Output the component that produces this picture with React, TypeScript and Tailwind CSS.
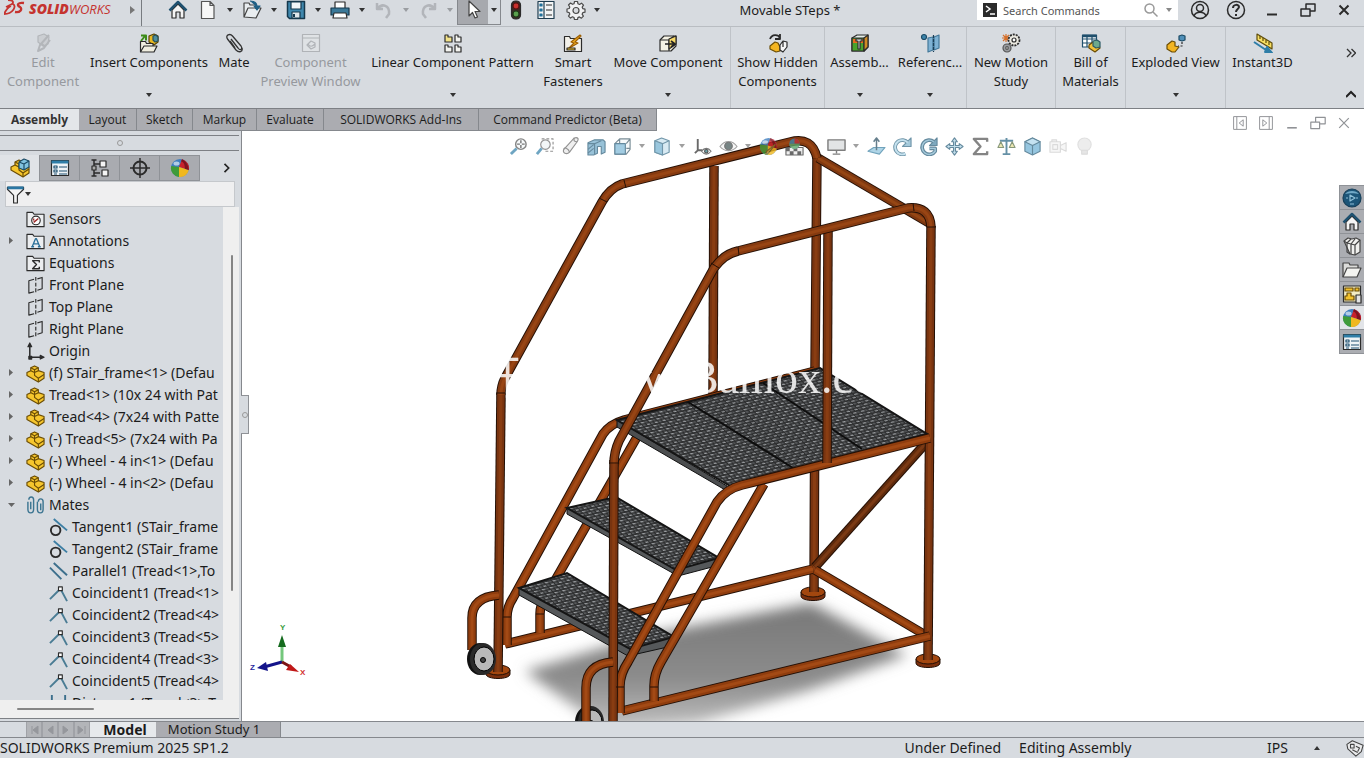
import type { ReactNode } from 'react';

interface IconProps {
  children: ReactNode;
  size?: string;
}

function Icon({ children, size = 'size-5' }: IconProps) {
  return (
    <svg
      viewBox="0 0 20 20"
      className={`${size} shrink-0`}
      fill="none"
      stroke="#2b2b2b"
      strokeWidth="1.2"
      strokeLinejoin="round"
      aria-hidden="true"
    >
      {children}
    </svg>
  );
}

function Ball() {
  return (
    <g stroke="none">
      <circle cx="10" cy="10" r="9" fill="#3f7fc0" />
      <path d="M9 9L12 1.200A9 9 0 0 1 18.800 12z" fill="#c8202c" />
      <path d="M9 9l9.800 3A9 9 0 0 1 9 19z" fill="#f0b81e" />
      <path d="M9 9v10A9 9 0 0 1 1.200 8z" fill="#3f9b3a" />
      <path d="M12 1.200c4 2 6 5 6.800 10.800l-4-1.300C15 7 14 4 11 3.500z" fill="#7d1420" />
      <ellipse cx="6.500" cy="5.500" rx="3" ry="2" fill="#fff" opacity=".6" />
    </g>
  );
}

const yellowPart = (
  <>
    <path d="M1 9l4-2V4l4-2 4 2v3l6 2v6l-6 4-12-7z" fill="#f6c62d" stroke="#6b4d05" />
    <path d="M5 7l4 2 4-2M9 9v3l4 3 6-4M13 15v4M5 4l4 2 4-2M9 6v3" stroke="#6b4d05" />
  </>
);

const homeIcon = (
  <>
    <path d="M4 10v8h4v-6h4v6h4v-8l-6-6z" fill="#f4f4f4" />
    <path d="M1.500 10.500L10 2l8.500 8.500" stroke="#1f5170" strokeWidth="2.500" />
  </>
);

const listIcon = (
  <>
    <path d="M1.500 2.500h17v15h-17z" fill="#eef3f6" />
    <path d="M1.500 4h17" stroke="#2f7ea8" strokeWidth="3" />
    <path d="M4 8h3v2H4zM4 12h3v2H4zM9 9h8M9 13h8M4 16h3M9 16h8" stroke="#1f5170" />
  </>
);

const folderPath = <path d="M1 17.500V2.500h6l1.500 2H19v13z" fill="#eceef0" />;

const icons = {
  home: homeIcon,
  page: <path d="M3.500 1.500h8.500l4 4v13H3.500zM12 1.500v4h4" fill="#f7f7f7" stroke="#555" />,
  open: (
    <>
      <path d="M2 17V3h5l1 2h6v4M2 17l4-9h13l-5 10z" fill="#e9edf0" stroke="#444" />
      <path d="M8 1c5 0 7 2 7 6M12 6l3 4 3-4z" fill="#1f5f85" stroke="#1f5f85" />
    </>
  ),
  save: (
    <>
      <path d="M1.500 1.500h17v17h-15l-2-2z" fill="#3f87ad" stroke="#16384c" strokeWidth="1.500" />
      <path d="M5 2h10v7H5z" fill="#f2f5f7" stroke="#16384c" />
      <path d="M6 12h8v6H6z" fill="#dfe6ea" stroke="#16384c" />
      <path d="M8 14v3" stroke="#16384c" strokeWidth="2" />
    </>
  ),
  print: (
    <>
      <path d="M5 8V2h10v6" fill="#fff" />
      <path d="M1 8h18v7H1z" fill="#3a7898" stroke="#16384c" />
      <path d="M4 13h12l1 5H3z" fill="#fff" />
    </>
  ),
  undo: <path d="M3 3v6h6M3.500 8.500C8 3 16 5 15 14l-3 4" stroke="#b2b5ba" strokeWidth="2.500" />,
  redo: <path d="M17 3v6h-6M16.500 8.500C12 3 4 5 5 14l3 4" stroke="#b2b5ba" strokeWidth="2.500" />,
  cursor: <path d="M6 1v15l3.500-3.500L12 18l2.500-1-2.500-5.500h5z" fill="#fff" stroke="#444" />,
  traffic: (
    <>
      <rect x="5.500" y="1" width="9" height="18" rx="4" fill="#3a2a24" />
      <circle cx="10" cy="6" r="3" fill="#c9302c" stroke="#5b1210" />
      <circle cx="10" cy="14" r="3" fill="#5aa04d" stroke="#1d3a18" />
    </>
  ),
  options: (
    <>
      <path d="M2 1.500h16v17H2zM8 1.500v17" fill="#f2f4f5" stroke="#1f3d50" />
      <path d="M4 4h2v2H4zM4 9h2v2H4zM4 14h2v2H4z" fill="#3187b5" stroke="#1f6c95" />
      <path d="M10 5h6M10 10h6M10 15h6" />
    </>
  ),
  gear: (
    <>
      <path
        d="M8.500 1.500h3l.5 2.300 1.500.7 2-1.300 2 2-1.300 2 .7 1.500 2.100.5v3l-2.200.5-.7 1.500 1.300 2-2 2-2-1.300-1.500.7-.4 2.100h-3L8 17.500l-1.500-.7-2 1.300-2-2 1.300-2-.7-1.500L1 12V9l2.200-.5.6-1.500-1.300-2 2-2 2 1.300L8 3.800z"
        fill="#f0f1f3"
        stroke="#4a4a4a"
      />
      <circle cx="10" cy="10.500" r="3" fill="#d8dbe0" stroke="#4a4a4a" />
    </>
  ),
  edit: (
    <>
      <path d="M5 3l6-2 5 3-1 7-5 2-5-4z" fill="#cbced2" stroke="#b3b6ba" />
      <path d="M16 2L7 12l-2 6 6-3 6-8M9 11l3 3" stroke="#b3b6ba" strokeWidth="2" />
    </>
  ),
  insert: (
    <>
      <path d="M10 3l5-2 4 2v6l-4 3-5-3z" fill="#e9b820" stroke="#594505" />
      <path d="M14 3l3-1 2 2v4l-3 1-2-2z" fill="#4f8f9c" stroke="#24505c" />
      <path d="M2 8l4-5M2 2.500h5v5" stroke="#3c8b18" strokeWidth="2" />
      <path d="M1.500 19V8.500h5l1 2H14v3M1.500 19l3.500-6h13l-3 6z" fill="#f0eee0" />
    </>
  ),
  clip: (
    <path
      d="M7 6l7 9c2 3 5 1 3-2L8.500 3C6 0 1 2 3.500 6L12 17c3 3 7 2 6-2M6 8l5 7"
      stroke="#333"
      strokeWidth="1.300"
    />
  ),
  preview: (
    <>
      <path d="M1.500 1.500h17v17h-17zM1.500 5h17" fill="#dfe2e5" stroke="#b0b3b7" />
      <path d="M6 12l4-4 4 2v4l-4 2zM7 11c2 3 4 3 7 0" stroke="#b0b3b7" />
    </>
  ),
  pattern: (
    <>
      <path d="M2 2h3v2h4v5H2z" fill="#f3e38a" />
      <path d="M12 2h3v2h3v5h-6zM2 12h3v2h4v5H2zM12 12h3v2h3v5h-6z" fill="#f4f4f0" />
    </>
  ),
  fasteners: (
    <>
      <path d="M1.500 18.500V3.500h5l1 2h11v13z" fill="#f3f1ea" />
      <path d="M17 2L8 9l3 1-6 6 10-6-3-1 6-6z" fill="#f5b120" stroke="#9c5f06" />
      <path d="M4 15h8v2H4z" fill="#f6c62d" />
    </>
  ),
  move: (
    <>
      <path d="M2 7l4-4h12v10l-5 5H2z" fill="#f4f2e4" />
      <path d="M2 7h9l5-4M11 7v11" />
      <path d="M11 6l7-3v8l-7 5z" fill="#f7d968" />
      <path d="M7 11h10M13 8l4 3-4 3" stroke="#222" strokeWidth="1.600" />
    </>
  ),
  hidden: (
    <>
      <path d="M2 6c2-5 8-5 10-1M12 1v5H7" strokeWidth="1.800" />
      <path d="M2 13l5-4 3 1 2 4v4l-4 1-6-3z" fill="#f3b522" stroke="#6b4d05" />
      <path d="M12 12l3-4 4 1v5l-4 5-3-2zM15 8v6" fill="#f7f7f7" />
    </>
  ),
  assembly: (
    <>
      <path d="M2 5l5-3h11v12l-4 4H2z" fill="#e4efe8" />
      <path d="M2 5h12v13H2z" fill="#49a32d" />
      <path d="M3 6h10v4H3z" fill="#e86b20" stroke="none" />
      <path d="M6 6h6v2h-2v8H8V8H6z" fill="#e8eef2" />
      <path d="M14 5l4-3v12l-4 4z" fill="#cf8b24" />
    </>
  ),
  reference: (
    <>
      <circle cx="4" cy="4" r="2.500" fill="#3c84ab" stroke="#1c4b66" />
      <path d="M8 5l5-1v13l-5 2zM14 4l5-2v13l-5 2z" fill="#7fb2d4" stroke="#44799a" />
      <path d="M13.500 2v17" stroke="#1c3d55" strokeDasharray="3 1" />
    </>
  ),
  motion: (
    <>
      <path d="M5 1v8M1 5h8M2 2l6 6M8 2L2 8" stroke="#d6702b" />
      <circle cx="13" cy="7" r="5.500" fill="#eceae2" strokeDasharray="2 1" strokeWidth="1.800" />
      <circle cx="13" cy="7" r="2" fill="#fff" />
      <circle cx="6" cy="15" r="4" fill="#9a9da1" stroke="#555" />
      <circle cx="6" cy="15" r="1.300" fill="#ddd" stroke="#555" />
    </>
  ),
  bom: (
    <>
      <path d="M1.500 2h14v12h-14zM1.500 6h14M1.500 10h14M6 2v12M11 2v12" fill="#fff" stroke="#1f4f6c" />
      <path d="M1.500 3h14" stroke="#1f4f6c" strokeWidth="2.500" />
      <path d="M8 12l4-3 5 1 2 5-5 4-6-4z" fill="#f3c23a" stroke="#6b4d05" />
      <path d="M12 8l4-1 3 2v5l-4 1-3-2z" fill="#6da98d" stroke="#2c5a66" />
    </>
  ),
  exploded: (
    <>
      <path d="M1 12l5-4 3 1v4l4 1-4 5H6l-5-3z" fill="#f3b522" stroke="#6b4d05" />
      <path d="M13 3l3-1 3 1v4l-3 1-3-1z" fill="#4f8fb8" stroke="#1c4b66" />
      <path d="M16 9v4h-4" strokeDasharray="2 1.500" />
    </>
  ),
  instant: (
    <>
      <path d="M4 1l15 9v6L4 7z" fill="#f8df62" stroke="#5f4d0b" />
      <path d="M7 3v3M10 5v3M13 7v3M16 9v3" stroke="#5f4d0b" />
      <path d="M1 9l12 8M14 14l5 6-7-1z" fill="#2f7ea8" stroke="#2f7ea8" strokeWidth="2" />
    </>
  ),
  part: yellowPart,
  assemblyTab: (
    <>
      {yellowPart}
      <path d="M9 4l5-3 5 2v6l-5 3-5-2z" fill="#82c3df" stroke="#1c4b66" />
      <path d="M9 4l5 2 5-3M14 6v6" stroke="#1c4b66" />
    </>
  ),
  list: listIcon,
  config: (
    <>
      <path d="M4 2v16M1.500 2h5M1.500 18h5M4 6h6M4 15h6" strokeWidth="1.500" />
      <path d="M10 3h6v6h-6zM12 12h6v6h-6z" fill="#f4f4f4" />
      <path d="M2 8h4v4H2z" fill="#aaa" />
    </>
  ),
  target: (
    <>
      <circle cx="10" cy="10" r="6.500" strokeWidth="2" />
      <path d="M10 0v20M0 10h20" strokeWidth="1.500" />
    </>
  ),
  ball: <Ball />,
  filter: (
    <>
      <path d="M1.500 2.500h17v2L12 11v8H8v-8L1.500 4.500z" fill="#f4f4f4" />
      <path d="M1.500 3h17" stroke="#2a76a3" strokeWidth="3" />
    </>
  ),
  sensors: (
    <>
      {folderPath}
      <circle cx="10.500" cy="11" r="4.500" fill="#fff" />
      <path d="M8 13l5-4M8 9v2" stroke="#9c2b2b" strokeWidth="1.500" />
    </>
  ),
  annotations: (
    <>
      {folderPath}
      <path d="M6.500 15.500L10 7h1l3.500 8.500M8 12.500h5M5.500 15.500h3M12.500 15.500h3" stroke="#2a6f98" strokeWidth="1.400" />
    </>
  ),
  equations: (
    <>
      {folderPath}
      <path d="M14 9V7H7l4 4-4 4.500h7v-2" strokeWidth="1.500" />
    </>
  ),
  plane: (
    <>
      <path d="M8.500 3.500L3 5v13l5.500-1.500M12 3l5-1.500v12L12 15" />
      <path d="M10.300 1v18" strokeDasharray="4 2" />
    </>
  ),
  origin: (
    <>
      <path d="M4 4v12h12" strokeWidth="1.600" />
      <path d="M2 5l2-4 2 4zM15 14l4 2-4 2zM3 15h3v3H3z" fill="#2b2b2b" />
    </>
  ),
  mates: (
    <path
      d="M2 6v8c0 5 6 5 6 0V4c0-4-5-4-5 0M5 6v8M12 6v8c0 5 6 5 6 0V6c0-4-5-4-5 0M15.500 8v7"
      stroke="#3c7591"
      strokeWidth="1.500"
    />
  ),
  tangent: (
    <>
      <circle cx="7" cy="13" r="5" strokeWidth="2" />
      <path d="M5 1l14 12" stroke="#3c7ea3" strokeWidth="2" />
    </>
  ),
  parallel: <path d="M1 6l12 12M5 1l14 13" stroke="#3c6f8c" strokeWidth="2" />,
  coincident: (
    <>
      <path d="M1 16L12 5l7 13" stroke="#4a7c94" strokeWidth="2" />
      <path d="M10 3h4v4h-4z" fill="#fff" />
    </>
  ),
  distance: <path d="M3 1v18M17 1v18M3 12h14" stroke="#3c6f8c" strokeWidth="2" />,
  zoomFit: (
    <>
      <circle cx="12.500" cy="7.500" r="5.500" fill="#f6f9fb" stroke="#666" strokeWidth="1.500" />
      <path d="M8 12l-6 6" stroke="#4b8fb3" strokeWidth="3" />
      <path d="M12.500 3.500v8M8.500 7.500h8" stroke="#555" strokeDasharray="3 2" strokeWidth="1.500" />
    </>
  ),
  zoomArea: (
    <>
      <path d="M7 2h12v13H9" strokeDasharray="3 2" stroke="#777" />
      <circle cx="11" cy="8" r="5" fill="#f0f4f6" stroke="#777" />
      <path d="M7 12l-5 6" stroke="#4b8fb3" strokeWidth="3" />
    </>
  ),
  pencil: (
    <>
      <path d="M14 1c4-1 5 1 3 4l-8 11c-3 3-8 1-6-3z" fill="#ececec" stroke="#777" />
      <path d="M14 1c-1 3 0 4 3 4M3 13c0-3 5-1 6 3" stroke="#777" />
    </>
  ),
  section: (
    <>
      <path d="M1 6l7-3h9l2 2v11l-4 2v-8h-4v7l-4 2H1z" fill="#7fb3cf" stroke="#3f6d86" />
      <path d="M1 7h7l7-3M8 7v11M1 13l6-5M1 17l6-5" stroke="#3f6d86" />
    </>
  ),
  cubeWire: (
    <>
      <path d="M7 2h11v11l-4 5H2V7zM14 7l4-5M7 2v5M14 12h4" fill="#f4f8fa" stroke="#59717d" />
      <path d="M2 7h11v11H2z" fill="#8cc0db" stroke="#3f6d86" />
    </>
  ),
  cubeShade: (
    <>
      <path d="M2 4l7-3 8 3v12l-7 3-8-3z" fill="#cfe6f1" stroke="#4e7d95" />
      <path d="M2 4l8 3v12l-8-3z" fill="#82bad6" stroke="#4e7d95" />
      <path d="M10 7l7-3" stroke="#4e7d95" />
    </>
  ),
  axes: (
    <>
      <path d="M5 2v12h5M5 14l-3 3" stroke="#444" strokeWidth="2" />
      <path d="M9 15c3-4 7-4 10 0-3 4-7 4-10 0z" fill="#fff" stroke="#555" />
      <circle cx="14" cy="15" r="1.800" fill="#3f8b93" />
    </>
  ),
  eye: (
    <>
      <path d="M1 10c5-7 13-7 18 0-5 6-13 6-18 0z" fill="#f4f4f4" stroke="#8c8c8c" />
      <circle cx="10" cy="9.500" r="4" fill="#566" stroke="#555" />
    </>
  ),
  appearance: (
    <>
      <Ball />
      <path d="M17 8l-7 9-3 1 1-3z" fill="#d9b34a" stroke="#7a6a2a" />
    </>
  ),
  scene: (
    <>
      <path d="M1 11h18v8H1z" fill="#ececec" stroke="#444" />
      <path d="M1 11h4v4H1zM9 11h4v4H9zM5 15h4v4H5zM13 15h4v4h-4z" fill="#444" stroke="none" />
      <circle cx="10" cy="7" r="5.500" fill="#3b82a8" stroke="none" />
      <path d="M10 7V1.500A5.500 5.500 0 0 1 15.500 7z" fill="#b9313a" stroke="none" />
      <path d="M4.500 7h11a5.500 5.500 0 0 1-11 0z" fill="#5aa468" stroke="none" />
    </>
  ),
  monitor: (
    <path d="M1 3h18v11H1zM10 14v3M6 18h8" fill="#dcdedf" stroke="#5e5e5e" strokeWidth="1.500" />
  ),
  normalTo: (
    <>
      <path d="M1 15l6-4h12l-6 7z" fill="#9ccbe2" stroke="#4e8dac" />
      <path d="M10 14V2M7 5l3-4 3 4" stroke="#3f5f70" strokeWidth="1.600" />
    </>
  ),
  rotate: (
    <>
      <path d="M13 17.500A7.500 7.500 0 1 1 15.500 6" stroke="#4e7d95" strokeWidth="4" />
      <path d="M19 1v9h-9z" fill="#8fbdd3" stroke="#4e7d95" />
      <path d="M13 17.500A7.500 7.500 0 1 1 15.500 6" stroke="#b8dcec" strokeWidth="2" />
    </>
  ),
  rotateG: (
    <>
      <path d="M15.500 5A7.500 7.500 0 1 0 17 15v-3h-6" stroke="#3f6d86" strokeWidth="4" />
      <path d="M19 1v8h-8z" fill="#5e93ae" stroke="#3f6d86" />
      <path d="M15.500 5A7.500 7.500 0 1 0 17 15v-3h-6" stroke="#8fbdd3" strokeWidth="1.500" />
    </>
  ),
  pan: (
    <path
      d="M10 1l3 4h-2v4h4V7l4 3-4 3v-2h-4v4h2l-3 4-3-4h2v-4H5v2l-4-3 4-3v2h4V5H7z"
      fill="#b5d8e8"
      stroke="#3f6d86"
    />
  ),
  sigma: <path d="M17 5V2H3l7 8-7 8h14v-3" stroke="#666" strokeWidth="2.500" />,
  scales: (
    <>
      <path d="M10 1v16M3 4h14M6 18h8" stroke="#3f7590" strokeWidth="2" />
      <path d="M1 11l3-6 3 6zM13 11l3-6 3 6z" fill="#e9e2a0" stroke="#6a7f5a" />
    </>
  ),
  cube: (
    <>
      <path d="M10 1l8 4v10l-8 4-8-4V5z" fill="#7db9d9" stroke="#3f6d86" />
      <path d="M2 5l8 4 8-4-8-4z" fill="#b7dcee" stroke="#3f6d86" />
      <path d="M10 9v10" stroke="#3f6d86" />
    </>
  ),
  camera: (
    <path d="M1 5h11v11H1zM12 9l6-3v9l-6-3zM3 5V3h5v2M4 8h5v5H4z" fill="#f4f4f4" stroke="#d2d2d2" />
  ),
  bulb: (
    <>
      <circle cx="10" cy="8" r="7" fill="#e9e9e9" stroke="#d8d8d8" />
      <path d="M7 14h6v4H7z" fill="#e0e0e0" stroke="#d4d4d4" />
    </>
  ),
  world: (
    <>
      <circle cx="10" cy="10" r="9" fill="#1c5578" stroke="#173f59" />
      <path d="M3 6c3-4 11-4 14 0-4-1-10-1-14 0z" fill="#71a9c6" stroke="none" />
      <path d="M8 7l5 3-5 3zM4 10h2M14 10h2M8 16h4" stroke="#8fc0d8" />
    </>
  ),
  books: (
    <>
      <path d="M2 5l4-3 4 1 4-1 4 2v12l-5 3-5-1z" fill="#f0f0ee" stroke="#444" />
      <path d="M2 5l3 2v9l3 2M5 7l4-4M5 7l4 1v10M9 8l4-5M9 8l4 1v10M13 9l5-5" stroke="#444" />
    </>
  ),
  folder: (
    <>
      <path d="M1 17V3h6l1 2h8v3" fill="#dcdcda" stroke="#444" />
      <path d="M1 17L5 8h14l-4 9z" fill="#f3f3f0" stroke="#444" />
    </>
  ),
  palette: (
    <>
      <path d="M1.500 2h17v16h-17z" fill="#f3ecc4" />
      <path d="M3 4h8v3H3zM13 4h4v3h-4zM5 9h4v3h3v4H3v-4h2z" fill="#f3c22e" stroke="#6b4d05" />
      <path d="M14 11h5v8h-5z" fill="#e3e3e3" />
    </>
  ),
  tag: (
    <>
      <path d="M1 6l6-4 12 5-2 7-6 5L2 11z" fill="#e9eaeb" stroke="#444" />
      <path d="M5 6h4v4H5zM11 8l4 2-2 4M7 12l6 3" stroke="#444" />
    </>
  ),
};

type IconName = keyof typeof icons;

function Caret({ className = 'text-[#333]' }: { className?: string }) {
  return (
    <svg viewBox="0 0 6 4" className={`h-1 w-1.5 shrink-0 ${className}`} fill="currentColor" aria-hidden="true">
      <path d="M0 0h6L3 4z" />
    </svg>
  );
}

const fileTools: { name: IconName; label: string; dim?: boolean }[] = [
  { name: 'page', label: 'New' },
  { name: 'open', label: 'Open' },
  { name: 'save', label: 'Save' },
  { name: 'print', label: 'Print' },
  { name: 'undo', label: 'Undo', dim: true },
  { name: 'redo', label: 'Redo', dim: true },
];

function Logo() {
  return (
    <svg viewBox="0 0 110 22" className="h-[22px] w-[110px] shrink-0" role="img" aria-label="SOLIDWORKS">
      <g fill="none" stroke="#c5332f" strokeWidth="1.800">
        <path d="M4 1c5 0 6 2 4 4L2 8M9 5c4 2 0 10-9 10 2-4 4-7 7-8" />
        <path d="M20 4c-6-1-8 2-4 4 3 2 0 6-5 5" strokeWidth="2.300" />
      </g>
      <text x="25" y="15" fontSize="14" fill="#c5332f" fontFamily="Open Sans, sans-serif" fontStyle="italic">
        <tspan fontWeight="800">SOLID</tspan>
        <tspan fontSize="13">WORKS</tspan>
      </text>
    </svg>
  );
}

function TitleBar() {
  return (
    <header className="flex h-[27px] shrink-0 items-start border-b border-[#b9bdc2] pr-0.5">
      <div className="flex h-5 items-center">
        <a href="#home" className="ml-1">
          <Logo />
        </a>
        <button aria-label="Expand menu" className="ml-4 flex h-5 w-[11px] items-center text-[#777]">
          <svg viewBox="0 0 5 8" className="h-2 w-[5px]" fill="currentColor">
            <path d="M0 0l5 4-5 4z" />
          </svg>
        </button>
      </div>
      <div className="mr-6 h-[26px] w-px bg-[#777b80]"></div>
      <div className="flex h-5 items-center">
        <button aria-label="Home" className="mr-[3px] flex w-6 justify-center">
          <Icon>{icons.home}</Icon>
        </button>
        {fileTools.map((tool) => (
          <div key={tool.name} className="flex items-center">
            <button aria-label={tool.label} className="flex w-[30px] justify-center">
              <Icon>{icons[tool.name]}</Icon>
            </button>
            <button aria-label={`${tool.label} menu`} className="flex h-5 w-3.5 items-center justify-center">
              <Caret className={tool.dim ? 'text-[#9a9da1]' : 'text-[#333]'} />
            </button>
          </div>
        ))}
      </div>
      <div className="flex h-[25px] border border-t-0 border-[#85888d]">
        <button aria-label="Select" className="flex w-[30px] justify-center bg-[#a7a9ae]">
          <Icon>{icons.cursor}</Icon>
        </button>
        <button aria-label="Select menu" className="flex h-5 w-3 items-center justify-center">
          <Caret />
        </button>
      </div>
      <div className="flex h-5 items-center">
        {(['traffic', 'options', 'gear'] as IconName[]).map((name) => (
          <button key={name} aria-label={name} className="flex w-[30px] justify-center">
            <Icon>{icons[name]}</Icon>
          </button>
        ))}
        <button aria-label="Options menu" className="flex h-5 w-3 items-center justify-center">
          <Caret />
        </button>
      </div>
      <h1 className="min-w-0 flex-1 truncate text-center text-[13px]/5">Movable STeps *</h1>
      <label className="flex h-5 w-[201px] items-center bg-white px-1.5">
        <svg viewBox="0 0 14 14" className="size-3.5 shrink-0" aria-hidden="true">
          <path d="M0 0h14v14H0z" fill="#2b2b2b" />
          <path d="M3 3l4 3-4 3M7 11h5" stroke="#fff" strokeWidth="1.500" fill="none" />
        </svg>
        <input
          aria-label="Search Commands"
          placeholder="Search Commands"
          className="ml-1.5 h-5 min-w-0 flex-1 text-[11px] outline-none placeholder:text-[#555]"
        />
        <svg viewBox="0 0 14 14" className="mr-2 size-3.5 shrink-0" fill="none" stroke="#999" strokeWidth="1.500" aria-hidden="true">
          <circle cx="5.500" cy="5.500" r="4.500" />
          <path d="M9 9l4.500 4.500" />
        </svg>
        <Caret className="text-[#888]" />
      </label>
      <div className="ml-1 flex h-5 items-center">
        <button aria-label="Account" className="flex w-9 justify-center">
          <Icon>
            <circle cx="10" cy="10" r="8.500" strokeWidth="1.500" />
            <circle cx="10" cy="8" r="3.500" strokeWidth="1.500" />
            <path d="M4 16c2-5 10-5 12 0" strokeWidth="1.500" />
          </Icon>
        </button>
        <button aria-label="Help" className="flex w-9 justify-center">
          <Icon>
            <circle cx="10" cy="10" r="8.500" strokeWidth="1.500" />
            <path d="M7 8c0-4 6-4 6-1 0 2-3 2-3 5M10 14v2" strokeWidth="2" />
          </Icon>
        </button>
        <button aria-label="Minimize" className="flex w-9 justify-center">
          <Icon>
            <path d="M5 14.500h10" strokeWidth="2" />
          </Icon>
        </button>
        <button aria-label="Restore" className="flex w-9 justify-center">
          <Icon>
            <path d="M3 9h9v7H3zM8 9V4h9v7h-5" strokeWidth="1.500" />
          </Icon>
        </button>
        <button aria-label="Close" className="flex w-9 justify-center">
          <Icon>
            <path d="M5.500 5.500l9 9M14.500 5.500l-9 9" strokeWidth="2" />
          </Icon>
        </button>
      </div>
    </header>
  );
}

interface Command {
  icon: IconName;
  lines: string[];
  width: string;
  menu?: boolean;
  divider?: boolean;
  disabled?: boolean;
}

const commands: Command[] = [
  { icon: 'edit', lines: ['Edit', 'Component'], width: 'w-[86px]', disabled: true },
  { icon: 'insert', lines: ['Insert Components'], width: 'w-[126px]', menu: true },
  { icon: 'clip', lines: ['Mate'], width: 'w-11' },
  { icon: 'preview', lines: ['Component', 'Preview Window'], width: 'w-[109px]', disabled: true },
  { icon: 'pattern', lines: ['Linear Component Pattern'], width: 'w-[175px]', menu: true },
  { icon: 'fasteners', lines: ['Smart', 'Fasteners'], width: 'w-[66px]' },
  { icon: 'move', lines: ['Move Component'], width: 'w-[125px]', menu: true, divider: true },
  { icon: 'hidden', lines: ['Show Hidden', 'Components'], width: 'w-[94px]', divider: true },
  { icon: 'assembly', lines: ['Assemb...'], width: 'w-[69px]', menu: true },
  { icon: 'reference', lines: ['Referenc...'], width: 'w-[73px]', menu: true, divider: true },
  { icon: 'motion', lines: ['New Motion', 'Study'], width: 'w-[89px]', divider: true },
  { icon: 'bom', lines: ['Bill of', 'Materials'], width: 'w-[70px]', divider: true },
  { icon: 'exploded', lines: ['Exploded View'], width: 'w-[100px]', menu: true, divider: true },
  { icon: 'instant', lines: ['Instant3D'], width: 'w-[73px]' },
];

function Ribbon() {
  return (
    <div className="flex h-[81px] shrink-0">
      {commands.map((command) => (
        <button
          key={command.icon}
          disabled={command.disabled}
          className={`flex flex-col items-center pt-1.5 text-[13px]/[19px] whitespace-nowrap disabled:text-[#96999e] ${command.width} ${command.divider ? 'border-r border-[#bfc3c8]' : ''}`}
        >
          <Icon>{icons[command.icon]}</Icon>
          {command.lines.map((line) => (
            <span key={line}>{line}</span>
          ))}
          {command.menu && (
            <span className="mt-auto pb-[11px]">
              <Caret />
            </span>
          )}
        </button>
      ))}
      <div className="ml-auto flex w-[26px] flex-col items-center justify-end gap-8 pb-2">
        <button aria-label="More commands">
          <svg viewBox="0 0 10 10" className="size-2.5" fill="none" stroke="#333" strokeWidth="1.300">
            <path d="M1 1l4 4-4 4M5.500 1l4 4-4 4" />
          </svg>
        </button>
        <button aria-label="Collapse ribbon">
          <svg viewBox="0 0 10 10" className="size-2.5" fill="none" stroke="#222" strokeWidth="2">
            <path d="M0 7l5-5 5 5" />
          </svg>
        </button>
      </div>
    </div>
  );
}

const tabs = [
  { label: 'Layout', width: 'w-[58px]' },
  { label: 'Sketch', width: 'w-14' },
  { label: 'Markup', width: 'w-16' },
  { label: 'Evaluate', width: 'w-[67px]' },
  { label: 'SOLIDWORKS Add-Ins', width: 'w-[155px]' },
  { label: 'Command Predictor (Beta)', width: 'w-[178px]' },
];

function TabBar() {
  return (
    <nav className="flex h-[23px] shrink-0 border-t border-[#7d8085] bg-white font-['Open_Sans',sans-serif] text-xs">
      <button className="w-[79px] border-b border-[#8c8f94] bg-[#e3e6e9] font-bold text-[#333]">Assembly</button>
      {tabs.map((tab) => (
        <button
          key={tab.label}
          className={`border-r border-b border-[#85888d] bg-[#abacb1] whitespace-nowrap ${tab.width}`}
        >
          {tab.label}
        </button>
      ))}
      <div className="ml-auto flex items-end pr-2">
        <button aria-label="Previous pane" className="w-[26px]">
          <Icon size="size-4">
            <path d="M2 2h16v16H2zM6 2v16M14 6v8l-5-4z" stroke="#909296" />
          </Icon>
        </button>
        <button aria-label="Next pane" className="w-[26px]">
          <Icon size="size-4">
            <path d="M2 2h16v16H2zM14 2v16M6 6v8l5-4z" stroke="#909296" />
          </Icon>
        </button>
        <button aria-label="Minimize document" className="w-[26px]">
          <Icon size="size-4">
            <path d="M4 16h12" stroke="#909296" strokeWidth="2" />
          </Icon>
        </button>
        <button aria-label="Restore document" className="w-[26px]">
          <Icon size="size-4">
            <path d="M1 9h11v8H1zM7 9V3h12v8h-7" stroke="#909296" strokeWidth="1.500" />
          </Icon>
        </button>
        <button aria-label="Close document" className="w-5">
          <Icon size="size-4">
            <path d="M4 4l12 12M16 4L4 16" stroke="#909296" strokeWidth="1.500" />
          </Icon>
        </button>
      </div>
    </nav>
  );
}

interface TreeItem {
  icon: IconName;
  label: string;
  arrow?: 'closed' | 'open';
  child?: boolean;
}

const tree: TreeItem[] = [
  { icon: 'sensors', label: 'Sensors' },
  { icon: 'annotations', label: 'Annotations', arrow: 'closed' },
  { icon: 'equations', label: 'Equations' },
  { icon: 'plane', label: 'Front Plane' },
  { icon: 'plane', label: 'Top Plane' },
  { icon: 'plane', label: 'Right Plane' },
  { icon: 'origin', label: 'Origin' },
  { icon: 'part', label: '(f) STair_frame<1> (Defau', arrow: 'closed' },
  { icon: 'part', label: 'Tread<1> (10x 24 with Pat', arrow: 'closed' },
  { icon: 'part', label: 'Tread<4> (7x24 with Patte', arrow: 'closed' },
  { icon: 'part', label: '(-) Tread<5> (7x24 with Pa', arrow: 'closed' },
  { icon: 'part', label: '(-) Wheel - 4 in<1> (Defau', arrow: 'closed' },
  { icon: 'part', label: '(-) Wheel - 4 in<2> (Defau', arrow: 'closed' },
  { icon: 'mates', label: 'Mates', arrow: 'open' },
  { icon: 'tangent', label: 'Tangent1 (STair_frame', child: true },
  { icon: 'tangent', label: 'Tangent2 (STair_frame', child: true },
  { icon: 'parallel', label: 'Parallel1 (Tread<1>,To', child: true },
  { icon: 'coincident', label: 'Coincident1 (Tread<1>', child: true },
  { icon: 'coincident', label: 'Coincident2 (Tread<4>', child: true },
  { icon: 'coincident', label: 'Coincident3 (Tread<5>', child: true },
  { icon: 'coincident', label: 'Coincident4 (Tread<3>', child: true },
  { icon: 'coincident', label: 'Coincident5 (Tread<4>', child: true },
  { icon: 'distance', label: 'Distance1 (Tread<3>,T', child: true },
];

function FeatureTree() {
  return (
    <ul className="min-w-0 flex-1 overflow-hidden pt-px">
      {tree.map((item) => (
        <li
          key={item.label}
          className={`flex h-[22px] items-center text-sm/[22px] whitespace-nowrap ${item.child ? 'pl-[23px]' : ''}`}
        >
          <span className="flex w-[26px] shrink-0 pl-2">
            {item.arrow && (
              <button aria-label={`Toggle ${item.label}`}>
                <svg viewBox="0 0 8 8" className="size-2" fill="#666">
                  <path d={item.arrow === 'open' ? 'M0 2h7L3.500 6z' : 'M1 0l4 3.500L1 7z'} />
                </svg>
              </button>
            )}
          </span>
          <Icon size="size-[19px]">{icons[item.icon]}</Icon>
          <span className="ml-1">{item.label}</span>
        </li>
      ))}
    </ul>
  );
}

const panelTabs: IconName[] = ['assemblyTab', 'list', 'config', 'target', 'ball'];

function SidePanel() {
  return (
    <aside className="relative flex w-[242px] shrink-0 flex-col border-r border-[#85888d] pr-0.5">
      <div className="mt-1 flex h-4 shrink-0 items-center justify-center border-y border-[#7d8085]">
        <span className="size-1.5 rounded-full border border-[#999]"></span>
      </div>
      <div className="mt-1 flex h-[26px] shrink-0">
        {panelTabs.map((name, index) => (
          <button
            key={name}
            aria-label={name}
            className={`flex w-10 items-center justify-center border-r border-[#8f9297] ${index === 0 ? 'bg-[#e0e3e7]' : 'border-y bg-[#a9abb0]'}`}
          >
            <Icon>{icons[name]}</Icon>
          </button>
        ))}
        <button aria-label="More tabs" className="ml-auto flex w-5 items-center">
          <svg viewBox="0 0 8 12" className="ml-1 h-2.5 w-2" fill="none" stroke="#222" strokeWidth="2">
            <path d="M1 1l5 5-5 5" />
          </svg>
        </button>
      </div>
      <div className="mr-1 ml-[5px] flex h-[26px] shrink-0 items-center border border-[#c5c8cc] bg-[#efeff0]">
        <button aria-label="Filter" className="flex items-center">
          <Icon size="size-[19px]">{icons.filter}</Icon>
          <Caret />
        </button>
        <input aria-label="Filter tree" className="h-6 min-w-0 flex-1 bg-transparent outline-none" />
      </div>
      <div className="flex min-h-0 flex-1">
        <FeatureTree />
        <div className="w-4 shrink-0 bg-[#efefef] pt-12">
          <div className="ml-2 h-[336px] w-0.5 rounded bg-[#858585]"></div>
        </div>
      </div>
      <div className="flex h-[19px] shrink-0 items-center border-b border-[#7d8085] bg-[#efefef]">
        <div className="ml-[17px] h-0.5 w-[77px] rounded bg-[#858585]"></div>
      </div>
      <div className="h-0.5 shrink-0"></div>
      <button
        aria-label="Resize panel"
        className="absolute top-[264px] -right-2 z-10 flex h-[39px] w-2 items-center justify-center border border-l-0 border-[#8f9297] bg-[#d7dbe0]"
      >
        <span className="size-1.5 rounded-full border border-[#999]"></span>
      </button>
    </aside>
  );
}

interface TubeProps {
  d: string;
  fill?: string;
  shine?: string;
}

function Tube({ d, fill = '#8f3d0e', shine = '#a34a15' }: TubeProps) {
  return (
    <g fill="none" strokeLinejoin="round">
      <path d={d} stroke="#241006" strokeWidth="9.500" />
      <path d={d} stroke={fill} strokeWidth="7.500" />
      <path d={d} stroke={shine} strokeWidth="3" />
    </g>
  );
}

function Post({ d }: { d: string }) {
  return <Tube d={d} fill="#783410" shine="#893d12" />;
}

function Foot({ x, y }: { x: number; y: number }) {
  return (
    <g stroke="#241006">
      <path d={`M${x - 12} ${y}v4c0 6 24 6 24 0v-4z`} fill="#7b2f0c" />
      <ellipse cx={x} cy={y} rx="12" ry="5" fill="#a3470f" />
    </g>
  );
}

function Wheel({ x, y }: { x: number; y: number }) {
  return (
    <g>
      <ellipse cx={x - 3} cy={y} rx="13" ry="16" fill="#111" />
      <ellipse cx={x} cy={y} rx="13" ry="16" fill="#2a2a2a" />
      <ellipse cx={x + 1} cy={y} rx="10" ry="12" fill="#b9b9b9" stroke="#000" />
      <circle cx={x} cy={y + 1} r="2.500" fill="#444" stroke="#000" />
    </g>
  );
}

function Ladder() {
  return (
    <svg
      viewBox="242 131 1122 590"
      className="absolute inset-0 size-full"
      role="img"
      aria-label="Movable steps assembly"
    >
      <defs>
        <pattern id="grip" width="8" height="6" patternUnits="userSpaceOnUse" patternTransform="rotate(-14) skewX(30)">
          <path d="M0 0h8v6H0z" fill="#2e2f30" />
          <path d="M1 1.500h3.500M5 4.500h3" stroke="#9a9da0" strokeWidth="1.300" />
          <path d="M5.500 1.500h2M1 4.500h2.500" stroke="#5c5f61" strokeWidth="1.600" />
        </pattern>
        <filter id="soft" x="-20%" y="-20%" width="140%" height="140%">
          <feGaussianBlur stdDeviation="7" />
        </filter>
        <linearGradient id="ground" x1="0" y1="0" x2="0" y2="1">
          <stop offset="0" stopColor="#777" />
          <stop offset=".6" stopColor="#8c8c8c" />
          <stop offset="1" stopColor="#c4c4c4" />
        </linearGradient>
      </defs>

      <path d="M525 671l120-36 166-32 96 52-100 36-110 32-90 8z" fill="url(#ground)" filter="url(#soft)" />

      {/* far side frame */}
      <Foot x={813} y={592} />
      <Post d="M817 156L815 369L814 592" />
      <Post d="M714 166L713 396" />
      <Tube d="M505 644L813 569" />
      <Tube d="M925 444L815 567" fill="#5f2a0c" shine="#7b3a14" />
      <Tube d="M815 570L927 636" />
      <Tube d="M818 158L929 223" fill="#7f3810" shine="#954614" />
      <Tube d="M637 437L545 598Q540 605 540 614V633" />
      <Tube d="M815 371L624 420Q610 424 603 434L513 598Q507 607 507 617V645" />
      <Foot x={498} y={670} />
      <Post d="M498 672L501 393" />
      <Tube d="M501 395Q501 386 505 378L602 202Q610 188 622 184L790 142Q812 136 817 158" fill="#853a10" shine="#984514" />

      {/* near right post */}
      <Foot x={928} y={659} />
      <Post d="M931 226L928 660" />

      {/* deck and treads */}
      <path d="M617 420L727 486V491L617 427z" fill="#4c4e50" stroke="#111" />
      <path d="M617 420L820 368L927 434L730 486z" fill="url(#grip)" stroke="#151515" strokeWidth="2" />
      <path d="M688 402L793 468M763 383L862 449" stroke="#0d0d0d" strokeWidth="2" />
      <path d="M567 508V514L678 576L716 566L718 558z" fill="#55585a" stroke="#111" />
      <path d="M567 508L616 497L719 558L676 570z" fill="url(#grip)" stroke="#151515" strokeWidth="2" />
      <path d="M519 588V595L628 656L672 646L674 638z" fill="#55585a" stroke="#111" />
      <path d="M519 588L567 573L674 637L630 649z" fill="url(#grip)" stroke="#151515" strokeWidth="2" />

      {/* near side frame */}
      <Tube d="M622 711L930 636" />
      <Tube d="M764 484L661 662Q654 674 654 686V701" />
      <Tube d="M930 438L742 485Q726 489 717 502L628 662Q620 674 620 686V713" />
      <Post d="M828 231L827 463" />
      <Post d="M613 721L614 460" />
      <Tube d="M614 464Q614 452 619 441L714 268Q724 254 738 251L908 208Q930 206 931 227" fill="#853a10" shine="#984514" />

      <Tube d="M499 595Q472 597 472 618V650" />
      <Wheel x={483} y={659} />
      <Wheel x={591} y={722} />
      <Tube d="M613 662Q586 664 586 688V721" />

      <g stroke="#241006" strokeWidth="1">
        <path d="M496 393h9M609 463h9M599 198l8 4M624 180l2 8M711 263l8 5M738 247l1 8M913 203l1 8M927 227h9M503 617h8M616 687h8M650 687h8M536 614h8" />
      </g>

      <g fill="#fff" opacity=".85" fontFamily="Liberation Serif, Noto Sans CJK SC, serif" fontSize="46">
        <text x="575" y="393">www.</text>
        <text x="688" y="393">Bamox.com</text>
        <text x="476" y="393">开</text>
      </g>

      {/* view triad */}
      <g strokeWidth="3">
        <path d="M282 662V645" stroke="#74c77c" />
        <path d="M278 647l4-12 4 12z" fill="#146b1e" />
        <path d="M282 662l-18 5" stroke="#14148a" />
        <path d="M257 668l9-6 2 9z" fill="#14148a" />
        <path d="M282 662l9 5" stroke="#7c1414" />
        <path d="M299 672l-9-8-4 6z" fill="#c01818" />
      </g>
      <g fontFamily="Liberation Sans, sans-serif" fontSize="8" fontWeight="bold">
        <text x="280" y="630" fill="#3c9c3f">Y</text>
        <text x="250" y="670" fill="#2a2aa0">Z</text>
        <text x="300" y="675" fill="#d23030">X</text>
      </g>
    </svg>
  );
}

const viewTools: { name: IconName; after?: 'menu' | 'gap' }[] = [
  { name: 'zoomFit' },
  { name: 'zoomArea' },
  { name: 'pencil' },
  { name: 'section' },
  { name: 'cubeWire', after: 'menu' },
  { name: 'cubeShade', after: 'menu' },
  { name: 'axes' },
  { name: 'eye', after: 'menu' },
  { name: 'appearance' },
  { name: 'scene', after: 'gap' },
  { name: 'monitor', after: 'menu' },
  { name: 'normalTo' },
  { name: 'rotate' },
  { name: 'rotateG' },
  { name: 'pan' },
  { name: 'sigma' },
  { name: 'scales' },
  { name: 'cube' },
  { name: 'camera' },
  { name: 'bulb' },
];

const taskTabs: IconName[] = ['world', 'home', 'books', 'folder', 'palette', 'ball', 'list'];

function Viewport() {
  return (
    <main className="relative flex min-w-0 flex-1 flex-col bg-white">
      <Ladder />
      <div className="relative flex h-[30px] shrink-0 items-center justify-center pr-1 opacity-80">
        {viewTools.map((tool) => (
          <div key={tool.name} className="flex items-center">
            <button aria-label={tool.name} className="flex w-[26px] justify-center">
              <Icon size="size-[19px]">{icons[tool.name]}</Icon>
            </button>
            {tool.after === 'menu' && (
              <span className="flex w-3.5 justify-center">
                <Caret className="text-[#888]" />
              </span>
            )}
            {tool.after === 'gap' && <span className="w-4"></span>}
          </div>
        ))}
      </div>
      <div className="relative mt-6 flex w-[25px] flex-col self-end border-t border-l border-[#8f9297]">
        {taskTabs.map((name) => (
          <button
            key={name}
            aria-label={name}
            className={`flex h-6 items-center justify-center border-b border-[#8f9297] ${name === 'ball' ? 'bg-[#e2e4e8]' : 'bg-[#abadb2]'}`}
          >
            <Icon>{icons[name]}</Icon>
          </button>
        ))}
      </div>
    </main>
  );
}

const navPaths = ['M3 1v8M9 1L4 5l5 4z', 'M8 1L3 5l5 4z', 'M2 1l5 4-5 4z', 'M1 1l5 4-5 4zM8 1v8'];

function Footer() {
  return (
    <footer className="shrink-0 text-sm">
      <div className="flex h-[17px] border-y border-[#85888d] pl-[26px]">
        {navPaths.map((d, index) => (
          <button
            key={d}
            aria-label={`Sheet navigation ${index + 1}`}
            className="flex w-4 items-center justify-center border-x border-[#a0a2a7] bg-[#b3b5b9]"
          >
            <svg viewBox="0 0 10 10" className="size-2.5" fill="#95979c" stroke="#95979c">
              <path d={d} />
            </svg>
          </button>
        ))}
        <button className="w-[66px] bg-[#e6e9ec] pl-1 text-sm/[15px] font-bold">Model</button>
        <button className="w-[125px] border-r border-[#85888d] bg-[#abacb1] pr-2 text-[13px]/[15px]">
          Motion Study 1
        </button>
      </div>
      <div className="flex h-5 items-center text-sm/5">
        <span>SOLIDWORKS Premium 2025 SP1.2</span>
        <span className="ml-auto">Under Defined</span>
        <span className="ml-[18px] w-[230px]">Editing Assembly</span>
        <button className="ml-[18px] flex items-center gap-[26px]">
          IPS
          <svg viewBox="0 0 6 4" className="h-1 w-1.5" fill="#333">
            <path d="M0 4h6L3 0z" />
          </svg>
        </button>
        <button aria-label="Tags" className="ml-[26px]">
          <Icon size="size-[18px]">{icons.tag}</Icon>
        </button>
      </div>
    </footer>
  );
}

function App() {
  return (
    <div className="flex h-screen flex-col overflow-hidden bg-[#d7dbe0] font-['Noto_Sans','Open_Sans',sans-serif] text-[#1c1c1c]">
      <TitleBar />
      <Ribbon />
      <TabBar />
      <div className="flex min-h-0 flex-1">
        <SidePanel />
        <Viewport />
      </div>
      <Footer />
    </div>
  );
}

export default App;
